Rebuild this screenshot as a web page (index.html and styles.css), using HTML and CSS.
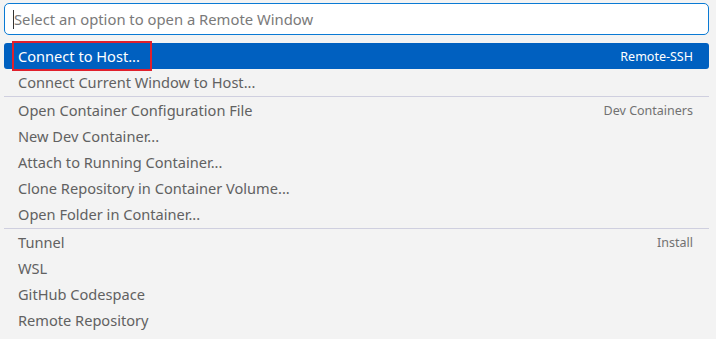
FILE: index.html
```html
<!DOCTYPE html>
<html lang="en">
<head>
  <meta charset="UTF-8">
  <title>Remote Window Picker</title>
  <link rel="stylesheet" href="styles.css">
</head>
<body>
  <div class="quick-pick">
    <div class="input-box">
      <span class="caret"></span>
      <span class="placeholder">Select an option to open a Remote Window</span>
    </div>

    <div class="list">
      <div class="item selected">
        <span class="label marked">Connect to Host...</span>
        <span class="desc">Remote-SSH</span>
      </div>
      <div class="item"><span class="label">Connect Current Window to Host...</span></div>

      <div class="item first">
        <span class="label">Open Container Configuration File</span>
        <span class="desc">Dev Containers</span>
      </div>
      <div class="item"><span class="label">New Dev Container...</span></div>
      <div class="item"><span class="label">Attach to Running Container...</span></div>
      <div class="item"><span class="label">Clone Repository in Container Volume...</span></div>
      <div class="item"><span class="label">Open Folder in Container...</span></div>

      <div class="item first">
        <span class="label">Tunnel</span>
        <span class="desc">Install</span>
      </div>
      <div class="item"><span class="label">WSL</span></div>
      <div class="item"><span class="label">GitHub Codespace</span></div>
      <div class="item"><span class="label">Remote Repository</span></div>
    </div>
  </div>
</body>
</html>
```

FILE: styles.css
```css
body {
  margin: 0;
  background-color: #f3f3f3;
  font-family: "Noto Sans", "Open Sans", sans-serif;
}

.quick-pick {
  padding: 3px 7px 0 4px;
}

/* search field at the top */
.input-box {
  height: 30px;
  background-color: #fff;
  border: 1px solid #0a7ad4;
  border-radius: 5px;
  display: flex;
  align-items: center;
  padding-left: 8px;
  font-size: 14.8px;
  color: #7a7a7a;
}

.caret {
  width: 1px;
  height: 19px;
  background-color: #333;
}

.list {
  margin-top: 8px;
}

.item {
  height: 26px;
  display: flex;
  align-items: center;
  justify-content: space-between;
  padding: 0 16px 0 14px;
  color: #616161;
  font-size: 14.6px;
}

/* first item of a group gets the divider line */
.item.first {
  border-top: 1px solid #cfcfdf;
  margin-top: 1px;
}

.item.selected {
  background-color: #0060c0;
  color: #fff;
  border-radius: 3px;
}

.label.marked {
  outline: 2px solid #e0202c;
  padding: 3px 10px 3px 4px;
  margin-left: -4px;
}

.desc {
  font-size: 12.5px;
  color: #717171;
}

.item.selected .desc {
  color: #fff;
}
```
